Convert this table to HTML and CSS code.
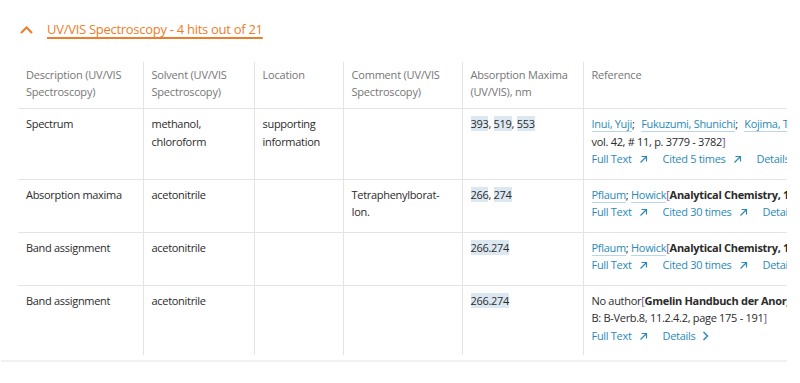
FILE: index.html
```html
<!DOCTYPE html>
<html lang="en">
<head>
<meta charset="utf-8">
<title>UV/VIS Spectroscopy</title>
<link rel="stylesheet" href="styles.css">
</head>
<body>
<section class="section">
  <div class="head">
    <svg class="chev-up" width="13" height="8" viewBox="0 0 13 8"><path d="M1 7 L6.5 1.5 L12 7" fill="none" stroke="#ee7d2b" stroke-width="2"/></svg>
    <a class="title">UV/VIS Spectroscopy - 4 hits out of 21</a>
  </div>
  <div class="scroller">
    <table class="grid">
      <colgroup>
        <col class="c1"><col class="c2"><col class="c3"><col class="c4"><col class="c5"><col class="c6">
      </colgroup>
      <thead>
        <tr>
          <th>Description (UV/VIS<br>Spectroscopy)</th>
          <th>Solvent (UV/VIS<br>Spectroscopy)</th>
          <th>Location</th>
          <th>Comment (UV/VIS<br>Spectroscopy)</th>
          <th>Absorption Maxima<br>(UV/VIS), nm</th>
          <th>Reference</th>
        </tr>
      </thead>
      <tbody>
        <tr>
          <td>Spectrum</td>
          <td>methanol,<br>chloroform</td>
          <td>supporting<br>information</td>
          <td></td>
          <td><span class="hl">393</span>, <span class="hl">519</span>, <span class="hl">553</span></td>
          <td class="ref">
            <div><a class="au">Inui, Yuji</a>; <a class="au sp">Fukuzumi, Shunichi</a>; <a class="au sp">Kojima, Takahiko</a><span class="br">[</span><b>Inorganic Chemistry, 2003,</b></div>
            <div>vol. 42, # 11, p. 3779 - 3782<span class="br">]</span></div>
            <div class="links"><a class="lk">Full Text <svg class="ext" width="9" height="9" viewBox="0 0 9 9"><path d="M2.5 1.5 H7.5 V6.5 M7.5 1.5 L1.5 7.5" fill="none" stroke="currentColor" stroke-width="1.2"/></svg></a><a class="lk">Cited 5 times <svg class="ext" width="9" height="9" viewBox="0 0 9 9"><path d="M2.5 1.5 H7.5 V6.5 M7.5 1.5 L1.5 7.5" fill="none" stroke="currentColor" stroke-width="1.2"/></svg></a><a class="lk">Details <svg class="gt" width="7" height="10" viewBox="0 0 7 10"><path d="M1.5 1 L5.5 5 L1.5 9" fill="none" stroke="currentColor" stroke-width="1.5"/></svg></a></div>
          </td>
        </tr>
        <tr>
          <td>Absorption maxima</td>
          <td>acetonitrile</td>
          <td></td>
          <td>Tetraphenylborat-<br>Ion.</td>
          <td><span class="hl">266</span>, <span class="hl">274</span></td>
          <td class="ref">
            <div><a class="au">Pflaum</a>; <a class="au">Howick</a><span class="br">[</span><b>Analytical Chemistry, 1956,</b> vol. 28, # 10, p. 1542 - 1544<span class="br">]</span></div>
            <div class="links"><a class="lk">Full Text <svg class="ext" width="9" height="9" viewBox="0 0 9 9"><path d="M2.5 1.5 H7.5 V6.5 M7.5 1.5 L1.5 7.5" fill="none" stroke="currentColor" stroke-width="1.2"/></svg></a><a class="lk">Cited 30 times <svg class="ext" width="9" height="9" viewBox="0 0 9 9"><path d="M2.5 1.5 H7.5 V6.5 M7.5 1.5 L1.5 7.5" fill="none" stroke="currentColor" stroke-width="1.2"/></svg></a><a class="lk">Details <svg class="gt" width="7" height="10" viewBox="0 0 7 10"><path d="M1.5 1 L5.5 5 L1.5 9" fill="none" stroke="currentColor" stroke-width="1.5"/></svg></a></div>
          </td>
        </tr>
        <tr>
          <td>Band assignment</td>
          <td>acetonitrile</td>
          <td></td>
          <td></td>
          <td><span class="hl">266.274</span></td>
          <td class="ref">
            <div><a class="au">Pflaum</a>; <a class="au">Howick</a><span class="br">[</span><b>Analytical Chemistry, 1956,</b> vol. 28, # 10, p. 1542 - 1544<span class="br">]</span></div>
            <div class="links"><a class="lk">Full Text <svg class="ext" width="9" height="9" viewBox="0 0 9 9"><path d="M2.5 1.5 H7.5 V6.5 M7.5 1.5 L1.5 7.5" fill="none" stroke="currentColor" stroke-width="1.2"/></svg></a><a class="lk">Cited 30 times <svg class="ext" width="9" height="9" viewBox="0 0 9 9"><path d="M2.5 1.5 H7.5 V6.5 M7.5 1.5 L1.5 7.5" fill="none" stroke="currentColor" stroke-width="1.2"/></svg></a><a class="lk">Details <svg class="gt" width="7" height="10" viewBox="0 0 7 10"><path d="M1.5 1 L5.5 5 L1.5 9" fill="none" stroke="currentColor" stroke-width="1.5"/></svg></a></div>
          </td>
        </tr>
        <tr>
          <td>Band assignment</td>
          <td>acetonitrile</td>
          <td></td>
          <td></td>
          <td><span class="hl">266.274</span></td>
          <td class="ref">
            <div>No author<span class="br">[</span><b>Gmelin Handbuch der Anorganischen Chemie, Gmelin Handbuch:</b></div>
            <div>B: B-Verb.8, 11.2.4.2, page 175 - 191<span class="br">]</span></div>
            <div class="links"><a class="lk">Full Text <svg class="ext" width="9" height="9" viewBox="0 0 9 9"><path d="M2.5 1.5 H7.5 V6.5 M7.5 1.5 L1.5 7.5" fill="none" stroke="currentColor" stroke-width="1.2"/></svg></a><a class="lk">Details <svg class="gt" width="7" height="10" viewBox="0 0 7 10"><path d="M1.5 1 L5.5 5 L1.5 9" fill="none" stroke="currentColor" stroke-width="1.5"/></svg></a></div>
          </td>
        </tr>
      </tbody>
    </table>
  </div>
</section>
</body>
</html>
```
FILE: styles.css
```css
html, body {
  margin: 0;
  padding: 0;
  background: #ffffff;
}
body {
  font-family: "Open Sans", "Liberation Sans", sans-serif;
  color: #2b2b2b;
}
.section {
  padding-top: 20px;
}
.head {
  display: flex;
  align-items: center;
  padding-left: 20px;
  height: 18px;
}
.chev-up {
  display: block;
  margin-right: 14px;
  margin-top: 1px;
}
.title {
  color: #ee7d2b;
  font-size: 13px;
  line-height: 18px;
  letter-spacing: -0.28px;
  text-decoration: underline;
  text-decoration-thickness: 1.5px;
  text-underline-offset: 3px;
}
.scroller {
  margin-top: 24px;
  width: 786px;
  overflow: hidden;
  padding-bottom: 5px;
  border-bottom: 2px solid #f1f1f1;
  margin-left: 1px;
}
.grid {
  margin-left: 17px;
  border-collapse: collapse;
  table-layout: fixed;
  width: 1000px;
  font-size: 11px;
  letter-spacing: -0.3px;
}
.c1 { width: 125px; }
.c2 { width: 111px; }
.c3 { width: 89px; }
.c4 { width: 119px; }
.c5 { width: 121px; }
.c6 { width: 435px; }
.grid th {
  text-align: left;
  font-weight: 400;
  color: #767676;
  font-size: 11px;
  letter-spacing: -0.2px;
  line-height: 17px;
  padding: 4px 8px 8px;
  vertical-align: top;
  border-bottom: 1px solid #e4e4e4;
  white-space: nowrap;
}
.grid td {
  vertical-align: top;
  padding: 6px 8px 11px;
  line-height: 17.5px;
  border-top: 1px solid #e4e4e4;
  white-space: nowrap;
}
.grid tbody tr:first-child td {
  border-top: 0;
}
.grid th + th,
.grid td + td {
  border-left: 1px solid #e4e4e4;
}
.hl {
  background: #dce8f1;
}
.au {
  color: #2a8ab6;
  border-bottom: 1px solid #b8d8e8;
}
.au.sp {
  margin-left: 4px;
}
.br {
  color: #7a4a8a;
}
.ref b {
  font-weight: 700;
  color: #2b2b2b;
}
.links {
  display: flex;
  gap: 15px;
}
.lk {
  color: #2a8ab6;
  display: inline-flex;
  align-items: center;
  gap: 7px;
}
.ext {
  display: block;
  margin-top: 2px;
}
.gt {
  display: block;
  margin-top: 1px;
}
```
